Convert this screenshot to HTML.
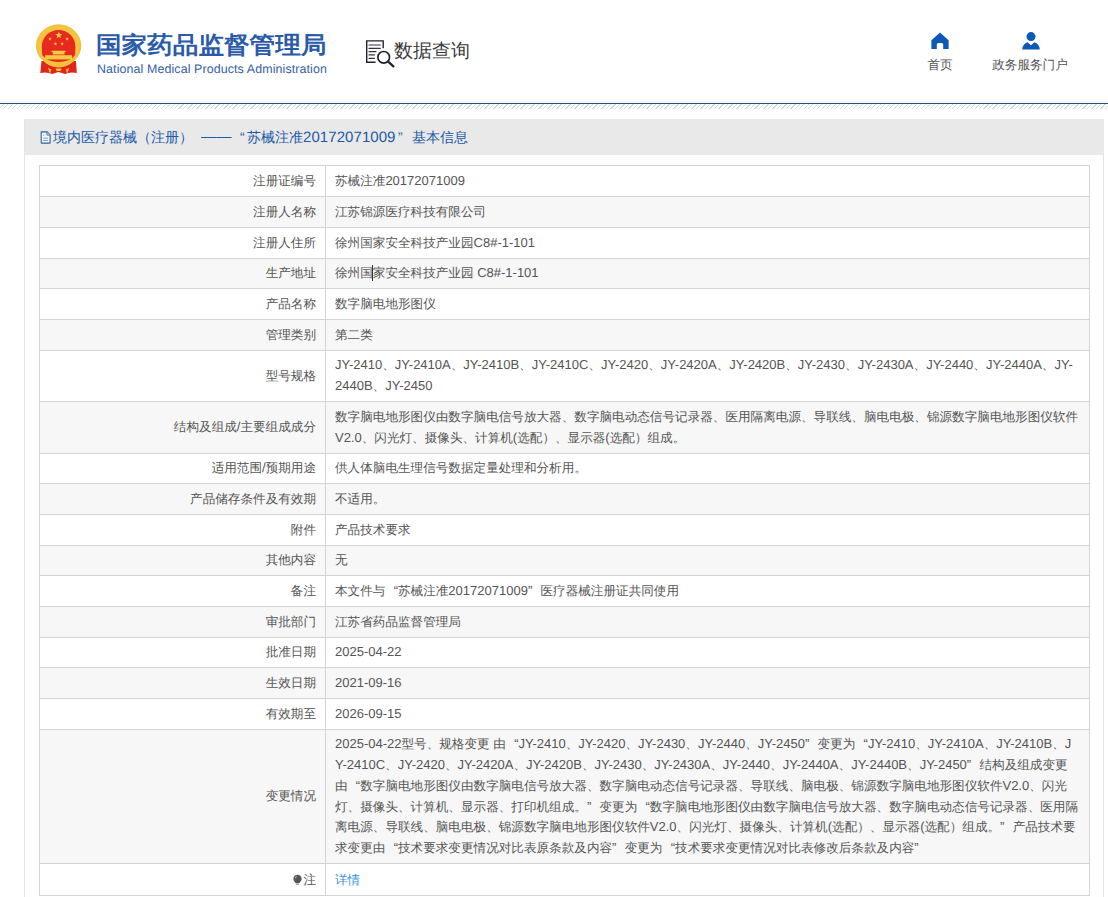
<!DOCTYPE html>
<html><head><meta charset="utf-8">
<style>
@font-face{font-family:"LS103";src:local("Liberation Sans"),local("LiberationSans");size-adjust:103.2%}
*{margin:0;padding:0;box-sizing:border-box}
html,body{width:1108px;height:897px;overflow:hidden;background:#fff;text-rendering:geometricPrecision;font-family:"Liberation Sans",sans-serif;color:#555}
#hdr{position:absolute;left:0;top:0;width:1108px;height:103px;background:#fff}
#line{position:absolute;left:0;top:103px;width:1108px;height:1px;background:#254d78}
#hatch{position:absolute;left:0;top:104px;width:1108px;height:5px;background:repeating-linear-gradient(135deg,#fff 0,#fff 2.2px,#d8d8d8 2.2px,#d8d8d8 3.18px)}
#glow{position:absolute;left:0;top:101px;width:1108px;height:2px;background:#f0fbfd}
#emb{position:absolute;left:30px;top:20px;width:56px;height:60px}
#t1{position:absolute;left:96px;top:29px;font-size:25.6px;font-weight:900;color:#2b5ba8;transform:scaleY(.92);transform-origin:0 60%;letter-spacing:0;white-space:nowrap;line-height:32px}
#t2{position:absolute;left:97px;top:61px;font-size:12.4px;letter-spacing:.12px;color:#3461a8;white-space:nowrap;line-height:16px}
#sq{position:absolute;left:360px;top:34px;width:40px;height:36px}
#sqt{position:absolute;left:394px;top:37px;font-size:19px;color:#3a3a3a;white-space:nowrap;line-height:30px}
.nav{position:absolute;top:32px;text-align:center;font-size:12.6px;color:#555;white-space:nowrap}
.nav svg{display:block;margin:0 auto}
#panel{position:absolute;left:24px;top:119px;width:1080px;height:800px;border-left:1px solid #e4e4e4;border-right:1px solid #e4e4e4}
#ptitle{position:absolute;left:0;top:0;width:1079px;height:36px;background:#e9e9e9;color:#2158a8;font-size:14px;line-height:36px;white-space:nowrap}
table{position:absolute;left:39px;top:165px;width:1050px;border-collapse:collapse;table-layout:fixed;font-size:12.6px;color:#555;font-family:"LS103","Liberation Sans",sans-serif}
td{border:1px solid #d4d4d4;padding:0 9px;line-height:20.7px;vertical-align:middle;white-space:nowrap}
td.l{text-align:right}
tr:nth-child(even) td{background:#f7f7f7}
tr.last td{padding-top:1.5px}
i{font-style:normal}
.lq{display:inline-block;width:1em;text-align:right}
.rq{display:inline-block;width:1em;text-align:left}
</style></head><body>
<div id="hdr">
  <svg id="emb" width="56" height="60" viewBox="30 20 56 60">
    <path d="M41.5 61 L76 61 L76.8 73 Q70 71.5 65 74 L58.5 72 L52 74 Q47 71.5 40.3 73 Z" fill="#e0261c"/>
    <ellipse cx="58.6" cy="45.6" rx="22.2" ry="20.8" fill="#f3c43c"/>
    <ellipse cx="58.6" cy="45.6" rx="22.2" ry="20.8" fill="none" stroke="#eab52a" stroke-width="0.8"/>
    <path d="M41.8 46.5 A16.8 16.5 0 1 1 75.4 46.5 L75 55 Q70 62 58.6 62 Q47 62 42.2 55 Z" fill="#e8291f"/>
    <polygon points="58.80,31.40 59.72,34.04 62.51,34.09 60.28,35.78 61.09,38.46 58.80,36.86 56.51,38.46 57.32,35.78 55.09,34.09 57.88,34.04" fill="#f6d13c"/><polygon points="50.00,37.00 50.45,38.29 51.81,38.31 50.72,39.13 51.12,40.44 50.00,39.66 48.88,40.44 49.28,39.13 48.19,38.31 49.55,38.29" fill="#f6d13c"/><polygon points="67.10,37.00 67.55,38.29 68.91,38.31 67.82,39.13 68.22,40.44 67.10,39.66 65.98,40.44 66.38,39.13 65.29,38.31 66.65,38.29" fill="#f6d13c"/><polygon points="55.40,42.00 55.85,43.29 57.21,43.31 56.12,44.13 56.52,45.44 55.40,44.66 54.28,45.44 54.68,44.13 53.59,43.31 54.95,43.29" fill="#f6d13c"/><polygon points="62.10,42.00 62.55,43.29 63.91,43.31 62.82,44.13 63.22,45.44 62.10,44.66 60.98,45.44 61.38,44.13 60.29,43.31 61.65,43.29" fill="#f6d13c"/>
    <path d="M52 50.8 H65.2 L66 52 H64.5 V54.6 H52.8 V52 H51.2 Z" fill="#f4cb45"/>
    <rect x="45.2" y="55.2" width="26.8" height="4.2" fill="#f4cb45"/>
    <path d="M44 58.5 Q50 65 58.6 65 Q67 65 73.5 58.5 L74 61 Q67 67.5 58.6 67.5 Q50 67.5 43.5 61 Z" fill="#f1c03a"/>
    <path d="M54 63.5 Q58.6 61.5 63.2 63.5 L63 66.5 Q58.6 65.5 54.2 66.5 Z" fill="#f1c03a"/>
    <path d="M48 68 L51.5 69.5 L50 73.5 Z M69.2 68 L65.7 69.5 L67.2 73.5 Z M55.5 68.5 H61.7 L60.5 71 H56.7Z" fill="#f3c43c"/>
  </svg>
  <div id="t1">国家药品监督管理局</div>
  <div id="t2">National Medical Products Administration</div>
  <svg id="sq" width="40" height="36" viewBox="360 34 40 36">
    <path d="M383.2 48.2 V40.9 H366.7 V62.2 H375.6" fill="none" stroke="#22222c" stroke-width="1.4"/>
    <path d="M369 45 H380.3 M369 48.3 H380.3 M369 51.7 H376 M369 54.9 H374.5 M369 58.3 H374.5" stroke="#33333c" stroke-width="1.2" stroke-linecap="round"/>
    <circle cx="383.7" cy="57.3" r="5.8" fill="none" stroke="#22222c" stroke-width="1.7"/>
    <path d="M388.2 61.6 L393.4 66.4" stroke="#22222c" stroke-width="2.2" stroke-linecap="round"/>
  </svg>
  <div id="sqt">数据查询</div>
  <div class="nav" style="left:926px;width:28px">
    <svg width="20" height="18" viewBox="0 0 20 18"><path d="M10 .6 L18.6 8.2 V17 H13.2 V12.6 Q13.2 11 11.6 11 H8.4 Q6.8 11 6.8 12.6 V17 H1.4 V8.2 Z" fill="#0d59b6"/></svg>
    <div style="margin-top:7px">首页</div>
  </div>
  <div class="nav" style="left:990px;width:80px">
    <svg width="20" height="18" viewBox="0 0 20 18" style="position:relative;left:1px"><circle cx="10" cy="4.6" r="4.5" fill="#0d59b6"/><path d="M1.2 17.4 Q1.8 11.4 6.6 10.2 L10 13.2 L13.4 10.2 Q18.2 11.4 18.8 17.4 Z" fill="#0d59b6"/></svg>
    <div style="margin-top:7px">政务服务门户</div>
  </div>
</div>
<div id="glow"></div><div id="line"></div>
<div id="hatch"></div>
<div id="panel">
  <div id="ptitle"><svg style="position:absolute;left:15px;top:11.5px" width="11" height="13" viewBox="0 0 11 13"><path d="M1.2 .9H7.2L10.1 3.8V11.4Q10.1 12.1 9.4 12.1H1.9Q1.2 12.1 1.2 11.4Z" fill="#f5f8fc" stroke="#2c5fa3" stroke-width="1.1" stroke-linejoin="round"/><path d="M6.9 .9V4.1H10.1" fill="#cfdcee" stroke="#2c5fa3" stroke-width=".8"/><path d="M3.1 4.2H4.4M3.1 7.2H8M3.1 9.5H8" stroke="#5a7cb0" stroke-width=".75"/></svg><span style="position:absolute;left:28px">境内医疗器械（注册）</span><span style="position:absolute;left:176px;top:-.8px;display:inline-block;transform:scaleX(1.09);transform-origin:0 50%">——</span><span style="position:absolute;left:215px">“</span><span style="position:absolute;left:222px">苏械注准<span style="font-size:15px;letter-spacing:.07px">20172071009</span></span><span style="position:absolute;left:373px">”</span><span style="position:absolute;left:387px">基本信息</span></div>
</div>
<table>
<colgroup><col style="width:286px"><col style="width:764px"></colgroup>
<tr style="height:31px"><td class="l">注册证编号</td><td>苏械注准20172071009</td></tr>
<tr style="height:31px"><td class="l">注册人名称</td><td>江苏锦源医疗科技有限公司</td></tr>
<tr style="height:31px"><td class="l">注册人住所</td><td>徐州国家安全科技产业园C8#-1-101</td></tr>
<tr style="height:30px"><td class="l">生产地址</td><td>徐州国家安全科技产业园 C8#-1-101</td></tr>
<tr style="height:31px"><td class="l">产品名称</td><td>数字脑电地形图仪</td></tr>
<tr style="height:31px"><td class="l">管理类别</td><td>第二类</td></tr>
<tr style="height:51px"><td class="l">型号规格</td><td>JY-2410、JY-2410A、JY-2410B、JY-2410C、JY-2420、JY-2420A、JY-2420B、JY-2430、JY-2430A、JY-2440、JY-2440A、JY-<br>2440B、JY-2450</td></tr>
<tr style="height:52px"><td class="l">结构及组成/主要组成成分</td><td>数字脑电地形图仪由数字脑电信号放大器、数字脑电动态信号记录器、医用隔离电源、导联线、脑电电极、锦源数字脑电地形图仪软件<br>V2.0、闪光灯、摄像头、计算机(选配）、显示器(选配）组成。</td></tr>
<tr style="height:30px"><td class="l">适用范围/预期用途</td><td>供人体脑电生理信号数据定量处理和分析用。</td></tr>
<tr style="height:31px"><td class="l">产品储存条件及有效期</td><td>不适用。</td></tr>
<tr style="height:31px"><td class="l">附件</td><td>产品技术要求</td></tr>
<tr style="height:30px"><td class="l">其他内容</td><td>无</td></tr>
<tr style="height:31px"><td class="l">备注</td><td>本文件与<i class="lq">“</i>苏械注准20172071009<i class="rq">”</i>医疗器械注册证共同使用</td></tr>
<tr style="height:31px"><td class="l">审批部门</td><td>江苏省药品监督管理局</td></tr>
<tr style="height:30px"><td class="l">批准日期</td><td>2025-04-22</td></tr>
<tr style="height:31px"><td class="l">生效日期</td><td>2021-09-16</td></tr>
<tr style="height:31px"><td class="l">有效期至</td><td>2026-09-15</td></tr>
<tr style="height:134px"><td class="l">变更情况</td><td>2025-04-22型号、规格变更 由<i class="lq">“</i>JY-2410、JY-2420、JY-2430、JY-2440、JY-2450<i class="rq">”</i>变更为<i class="lq">“</i>JY-2410、JY-2410A、JY-2410B、J<br>Y-2410C、JY-2420、JY-2420A、JY-2420B、JY-2430、JY-2430A、JY-2440、JY-2440A、JY-2440B、JY-2450<i class="rq">”</i>结构及组成变更<br>由<i class="lq">“</i>数字脑电地形图仪由数字脑电信号放大器、数字脑电动态信号记录器、导联线、脑电极、锦源数字脑电地形图仪软件V2.0、闪光<br>灯、摄像头、计算机、显示器、打印机组成。<i class="rq">”</i>变更为<i class="lq">“</i>数字脑电地形图仪由数字脑电信号放大器、数字脑电动态信号记录器、医用隔<br>离电源、导联线、脑电电极、锦源数字脑电地形图仪软件V2.0、闪光灯、摄像头、计算机(选配）、显示器(选配）组成。<i class="rq">”</i>产品技术要<br>求变更由<i class="lq">“</i>技术要求变更情况对比表原条款及内容<i class="rq">”</i>变更为<i class="lq">“</i>技术要求变更情况对比表修改后条款及内容<i class="rq">”</i></td></tr>
<tr style="height:32px" class="last"><td class="l"><svg width="9" height="12" viewBox="0 0 10 12" style="vertical-align:-2px;margin-right:1.5px"><path d="M5 .3A4.6 4.6 0 0 1 9.6 4.9C9.6 6.8 8 7.9 7.3 9.3H2.7C2 7.9 .4 6.8 .4 4.9A4.6 4.6 0 0 1 5 .3Z" fill="#555"/><path d="M3.3 10.6H6.7" stroke="#555" stroke-width="1"/><path d="M2.4 4.2Q2.8 2.6 4.3 2.1" stroke="#ddd" stroke-width=".8" fill="none"/></svg>注</td><td style="color:#3a8ee6">详情</td></tr>
</table>
<div style="position:absolute;left:372px;top:265px;width:1.3px;height:16px;background:#333"></div>
</body></html>
